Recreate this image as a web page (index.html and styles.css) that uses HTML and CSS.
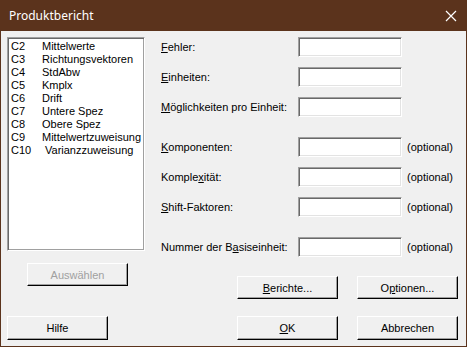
FILE: index.html
```html
<!DOCTYPE html>
<html lang="de">
<head>
<meta charset="utf-8">
<title>Produktbericht</title>
<link rel="stylesheet" href="styles.css">
</head>
<body>
<div class="dialog">
  <div class="titlebar">
    <span class="title">Produktbericht</span>
    <svg class="close" width="12" height="12" viewBox="0 0 12 12"><path d="M1 1 L11 11 M11 1 L1 11" stroke="#fff" stroke-width="1.2" fill="none"/></svg>
  </div>
  <div class="content">
    <div class="upper">
      <div class="left">
        <div class="listbox">
          <div class="item"><span class="code">C2</span><span>Mittelwerte</span></div>
          <div class="item"><span class="code">C3</span><span>Richtungsvektoren</span></div>
          <div class="item"><span class="code">C4</span><span>StdAbw</span></div>
          <div class="item"><span class="code">C5</span><span>Kmplx</span></div>
          <div class="item"><span class="code">C6</span><span>Drift</span></div>
          <div class="item"><span class="code">C7</span><span>Untere Spez</span></div>
          <div class="item"><span class="code">C8</span><span>Obere Spez</span></div>
          <div class="item"><span class="code">C9</span><span>Mittelwertzuweisung</span></div>
          <div class="item"><span class="code">C10</span><span class="shift">Varianzzuweisung</span></div>
        </div>
        <button class="btn select-btn" disabled>Auswählen</button>
      </div>
      <div class="right">
        <div class="group">
          <div class="row"><label class="lbl"><u>F</u>ehler:</label><input class="field" type="text"></div>
          <div class="row"><label class="lbl"><u>E</u>inheiten:</label><input class="field" type="text"></div>
          <div class="row"><label class="lbl"><u>M</u>öglichkeiten pro Einheit:</label><input class="field" type="text"></div>
        </div>
        <div class="group">
          <div class="row"><label class="lbl"><u>K</u>omponenten:</label><input class="field" type="text"><span class="opt">(optional)</span></div>
          <div class="row"><label class="lbl">Komple<u>x</u>ität:</label><input class="field" type="text"><span class="opt">(optional)</span></div>
          <div class="row"><label class="lbl"><u>S</u>hift-Faktoren:</label><input class="field" type="text"><span class="opt">(optional)</span></div>
        </div>
        <div class="group">
          <div class="row"><label class="lbl">Nummer der B<u>a</u>siseinheit:</label><input class="field" type="text"><span class="opt">(optional)</span></div>
        </div>
        <div class="actions">
          <button class="btn"><u>B</u>erichte...</button>
          <button class="btn">O<u>p</u>tionen...</button>
        </div>
      </div>
    </div>
    <div class="bottom">
      <button class="btn">Hilfe</button>
      <div class="bottom-right">
        <button class="btn"><u>O</u>K</button>
        <button class="btn">Abbrechen</button>
      </div>
    </div>
  </div>
</div>
</body>
</html>
```

FILE: styles.css
```css
* { box-sizing: border-box; }
html, body { margin: 0; padding: 0; background: #f0f0f0; }
body {
  font-family: "Liberation Sans", Arial, sans-serif;
  font-size: 11px;
  color: #000;
}
.dialog {
  width: 467px;
  height: 347px;
  border: 1px solid #5b331c;
  border-top: none;
  background: #f0f0f0;
  display: flex;
  flex-direction: column;
}
.titlebar {
  height: 31px;
  background: #5b331c;
  margin: 0 -1px;
  display: flex;
  align-items: center;
  justify-content: space-between;
  padding: 0 10px 0 9px;
}
.title {
  color: #fff;
  font-family: "Noto Sans", "Open Sans", sans-serif;
  font-size: 12px;
}
.close { display: block; }
.content {
  padding: 6px 0 0 6px;
  display: flex;
  flex-direction: column;
}
.upper { display: flex; }
.left {
  width: 138px;
  display: flex;
  flex-direction: column;
  align-items: flex-start;
}
.listbox {
  width: 138px;
  height: 214px;
  background: #fff;
  border: 1px solid;
  border-color: #a0a0a0 #ffffff #ffffff #a0a0a0;
  box-shadow: inset 1px 1px 0 #696969, inset -1px -1px 0 #a0a0a0;
  padding: 2px 0 0 3px;
}
.item {
  display: flex;
  height: 13px;
  line-height: 13px;
  white-space: nowrap;
}
.code { width: 31px; }
.shift { padding-left: 3px; }
.btn {
  width: 101px;
  height: 23px;
  font-family: "Liberation Sans", Arial, sans-serif;
  font-size: 11px;
  color: #000;
  background: #f0f0f0;
  border: 1px solid;
  border-color: #ffffff #000000 #000000 #ffffff;
  box-shadow: inset -1px -1px 0 #a0a0a0;
  padding: 0;
  margin: 0;
}
.btn:disabled { color: #a0a0a0; }
.select-btn { margin: 12px 0 0 20px; }
.right {
  margin-left: 16px;
  display: flex;
  flex-direction: column;
  gap: 20px;
}
.group {
  display: flex;
  flex-direction: column;
  gap: 10px;
}
.row {
  display: flex;
  align-items: center;
  height: 20px;
}
.lbl { width: 137px; white-space: nowrap; }
.field {
  width: 104px;
  height: 20px;
  margin: 0;
  background: #fff;
  border: 1px solid;
  border-color: #a0a0a0 #ffffff #ffffff #a0a0a0;
  box-shadow: inset 1px 1px 0 #696969, inset -1px -1px 0 #e3e3e3;
  padding: 0;
}
.opt { margin-left: 5px; }
.actions {
  margin: -1px 0 0 76px;
  display: flex;
  gap: 19px;
}
.bottom {
  display: flex;
  margin-top: 17px;
}
.bottom .btn { height: 24px; }
.bottom-right {
  margin-left: 129px;
  display: flex;
  gap: 19px;
}
```
